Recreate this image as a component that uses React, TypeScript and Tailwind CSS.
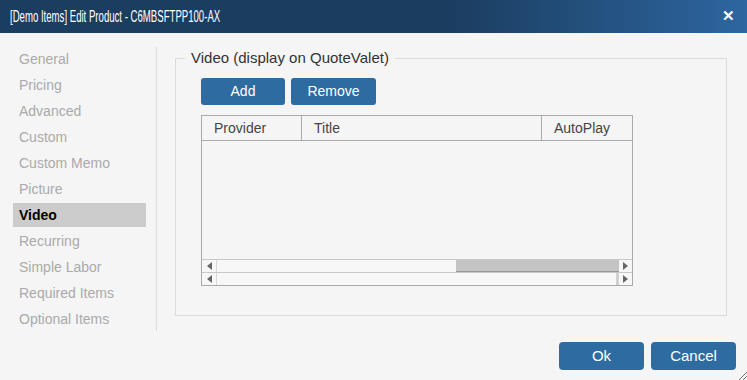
const tabs = [
  "General",
  "Pricing",
  "Advanced",
  "Custom",
  "Custom Memo",
  "Picture",
  "Video",
  "Recurring",
  "Simple Labor",
  "Required Items",
  "Optional Items",
];

function ScrollBar({ thumb }: { thumb: boolean }) {
  return (
    <div className="flex h-[13px] border-t border-[#c8c8c8] bg-[#f7f7f7]">
      <div className="flex w-[15px] items-center justify-center border-r border-[#d8d8d8]">
        <div className="h-0 w-0 border-y-[4px] border-r-[5px] border-y-transparent border-r-[#666]" />
      </div>
      <div className="flex flex-1">
        <div className={thumb ? "w-[239px]" : "flex-1"} />
        {thumb ? <div className="flex-1 border-b border-[#999] bg-[#c4c4c4]" /> : <div className="w-[3px] bg-[#d0d0d0]" />}
      </div>
      <div className="flex w-[13px] items-center justify-center">
        <div className="h-0 w-0 border-y-[4px] border-l-[5px] border-y-transparent border-l-[#666]" />
      </div>
    </div>
  );
}

export default function App() {
  return (
    <div className="relative flex h-[380px] w-[747px] flex-col overflow-hidden bg-[#f5f5f5] font-['Liberation_Sans',Arial,sans-serif] text-[14px]">
      <div className="flex h-[33px] items-center justify-between bg-gradient-to-r from-[#1b3d60] from-60% to-[#2d66a0] pl-[10px] pr-[12px] text-white">
        <span className="origin-left scale-x-[0.6] whitespace-nowrap text-[16px]">[Demo Items] Edit Product - C6MBSFTPP100-AX</span>
        <span className="text-[15px] font-bold">✕</span>
      </div>

      <div className="flex flex-1 pt-[14px]">
        <div className="h-[284px] w-[157px] border-r border-[#dcdcdc] pl-[13px] pr-[10px]">
          <ul className="flex flex-col gap-[2px]">
            {tabs.map((t) => (
              <li
                key={t}
                className={
                  t === "Video"
                    ? "h-6 bg-[#cccccc] px-1.5 leading-6 font-bold text-black"
                    : "h-6 px-1.5 leading-6 text-[#aaaaaa]"
                }
              >
                {t}
              </li>
            ))}
          </ul>
        </div>

        <div className="flex-1 pl-[18px] pr-[20px]">
          <fieldset className="h-[269px] border border-[#dcdcdc] px-[25px] pt-[8px]">
            <legend className="-ml-[16px] px-[6px] text-[15px] text-[#333]">Video (display on QuoteValet)</legend>
            <div className="flex gap-[6px]">
              <button className="h-[27px] w-[84px] rounded-[3px] bg-[#2e6ba1] text-white">Add</button>
              <button className="h-[27px] w-[85px] rounded-[3px] bg-[#2e6ba1] text-white">Remove</button>
            </div>
            <div className="mt-[10px] flex h-[171px] w-[432px] flex-col border border-[#aaaaaa]">
              <div className="flex h-[25px] border-b border-[#aaaaaa] text-[#444]">
                <div className="w-[100px] border-r border-[#aaaaaa] pl-[12px] leading-6">Provider</div>
                <div className="w-[240px] border-r border-[#aaaaaa] pl-[12px] leading-6">Title</div>
                <div className="flex-1 pl-[12px] leading-6">AutoPlay</div>
              </div>
              <div className="flex-1" />
              <ScrollBar thumb />
              <ScrollBar thumb={false} />
            </div>
          </fieldset>
        </div>
      </div>

      <div className="flex justify-end gap-[7px] pb-[10px] pr-[11px]">
        <button className="h-[28px] w-[85px] rounded-[4px] bg-[#2e6ba1] text-[15px] text-white">Ok</button>
        <button className="h-[28px] w-[85px] rounded-[4px] bg-[#2e6ba1] text-[15px] text-white">Cancel</button>
      </div>

      <svg className="absolute bottom-0 right-0" width="9" height="9" viewBox="0 0 9 9">
        <path d="M1 9 L9 1 M5 9 L9 5" stroke="#777" strokeWidth="1" />
      </svg>
    </div>
  );
}
